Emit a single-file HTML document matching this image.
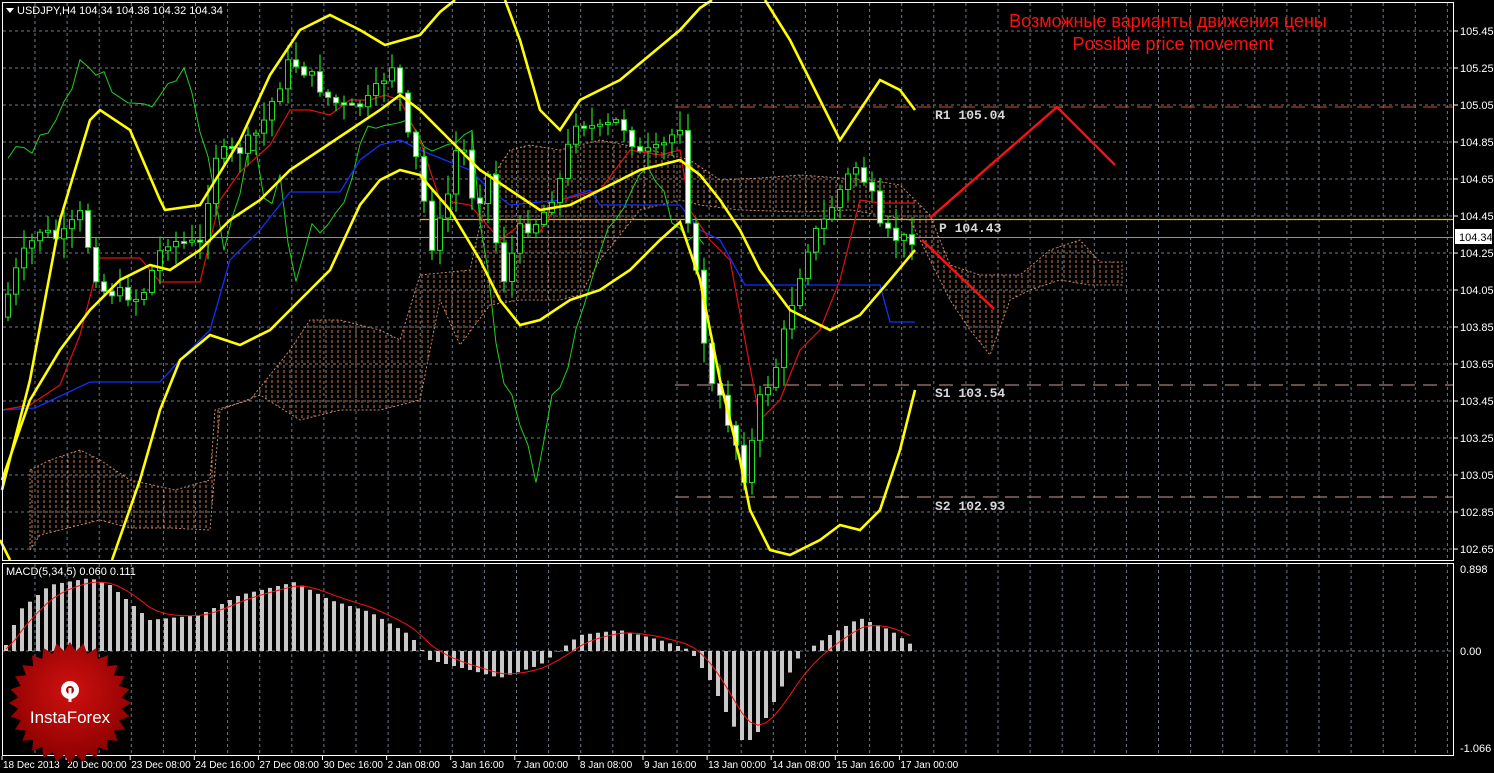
<!DOCTYPE html>
<html><head><meta charset="utf-8"><style>
html,body{margin:0;padding:0;background:#000;width:1494px;height:773px;overflow:hidden}
svg{display:block}
.ax{font-family:"Liberation Sans",sans-serif;font-size:11px;fill:#fff}
.xl{font-family:"Liberation Sans",sans-serif;font-size:10px;fill:#fff}
.lv{font-family:"Liberation Mono",monospace;font-size:13px;fill:#d8d8d8;font-weight:bold}
</style></head><body>
<svg id="s" width="1494" height="773" xmlns="http://www.w3.org/2000/svg">
<defs>
<pattern id="hatch" width="6" height="5" patternUnits="userSpaceOnUse">
<line x1="2" y1="0" x2="2" y2="3" stroke="#e8905a" stroke-width="1"/>
</pattern>
<radialGradient id="rg" cx="50%" cy="40%" r="60%"><stop offset="0" stop-color="#d01010"/><stop offset="1" stop-color="#8a0000"/></radialGradient>
</defs>
<rect x="0" y="0" width="1494" height="773" fill="#000"/>
<g id="grid" stroke="#6a7a8a" stroke-dasharray="3,3" stroke-width="1"></g>
<polygon fill="url(#hatch)" stroke="#e8a080" stroke-dasharray="2,2" stroke-width="1" opacity="0.85" points="30,470 50,460 80,450 100,460 130,480 175,490 210,480 215,410 250,400 290,350 310,320 340,320 380,330 400,340 420,275 470,270 490,180 510,150 530,145 560,150 600,140 650,150 690,160 720,180 760,178 800,175 840,178 870,180 900,185 930,215 950,265 980,275 1020,275 1050,250 1080,240 1100,262 1122,262 1122,285 1090,285 1060,280 1030,290 1010,300 990,355 970,330 950,300 930,260 910,220 880,215 850,210 800,212 740,210 700,205 680,200 640,210 600,260 580,295 560,300 520,300 490,305 460,345 440,300 420,400 380,410 340,410 300,420 260,395 220,410 210,530 170,528 130,528 100,520 60,530 40,535 30,550"/>
<line x1="675" y1="107" x2="1454" y2="107" stroke="#d05030" stroke-dasharray="14,8"/>
<line x1="675" y1="385" x2="1454" y2="385" stroke="#c8a090" stroke-dasharray="14,8"/>
<line x1="675" y1="497" x2="1454" y2="497" stroke="#c8a090" stroke-dasharray="14,8"/>
<line x1="420" y1="219.5" x2="1454" y2="219.5" stroke="#e8b000" stroke-width="1.3"/>
<line x1="2" y1="237.5" x2="1454" y2="237.5" stroke="#8a949e" stroke-width="1"/>
<polyline id="green" fill="none" stroke="#20d020" stroke-width="1"/>
<polyline fill="none" stroke="#1030ff" stroke-width="1.3" points="2,410 35,408 90,382 160,382 180,360 210,330 230,260 260,230 290,192 340,192 360,160 380,145 400,140 420,150 440,158 470,170 490,190 510,205 560,200 590,190 600,205 680,205 700,230 720,240 745,285 880,285 890,322 915,322"/>
<polyline fill="none" stroke="#e01010" stroke-width="1.2" points="2,410 30,405 60,385 80,335 100,258 140,258 160,282 200,282 220,200 240,172 270,145 290,110 310,110 330,115 350,100 370,100 385,95 400,100 420,140 440,200 470,205 500,240 520,225 540,232 560,200 600,190 630,150 660,155 680,150 690,210 710,240 730,260 760,420 780,400 800,350 820,330 840,280 860,200 880,203 915,203"/>
<g id="candles"></g>
<g fill="none" stroke="#ffff00" stroke-width="2.6">
<polyline points="2,490 30,380 60,220 90,120 100,110 130,130 160,200 165,210 200,205 240,140 270,75 300,30 330,15 360,30 385,45 420,35 440,12 455,0"/>
<polyline points="505,0 520,40 540,110 560,130 580,100 620,80 650,55 680,30 700,8 712,0"/>
<polyline points="765,0 790,40 820,100 840,140 860,110 880,80 900,90 915,110"/>
<polyline points="2,480 30,400 60,350 90,310 120,280 150,265 170,270 200,250 230,220 260,200 290,170 320,150 350,130 380,110 400,95 420,110 450,140 480,170 510,190 540,210 570,205 600,190 640,170 680,160 700,175 720,200 740,230 760,270 790,310 830,330 860,315 890,280 915,250"/>
<polyline points="0,540 10,560"/>
<polyline points="112,560 140,480 160,410 180,360 210,335 240,345 270,330 300,300 330,270 360,205 380,180 400,170 420,175 450,210 480,260 500,300 520,325 540,320 570,300 600,290 630,270 660,240 680,222 700,280 720,380 740,460 750,510 770,550 790,555 820,540 840,525 860,530 880,510 900,450 915,390"/>
</g>
<g stroke="#ff1010" stroke-width="2.4" fill="none">
<polyline points="930,218 1057,107 1115,165"/>
<polyline points="922,240 994,309"/>
</g>
<text x="1168" y="27" text-anchor="middle" font-family="Liberation Sans,sans-serif" font-size="18" fill="#ff1010">Возможные варианты движения цены</text>
<text x="1173" y="50" text-anchor="middle" font-family="Liberation Sans,sans-serif" font-size="18" fill="#ff1010">Possible price movement</text>
<text class="lv" x="935" y="119">R1 105.04</text>
<text class="lv" x="939" y="232">P 104.43</text>
<text class="lv" x="935" y="397">S1 103.54</text>
<text class="lv" x="935" y="510">S2 102.93</text>
<line x1="2" y1="651" x2="1454" y2="651" stroke="#6a7a8a" stroke-dasharray="3,3"/>
<g id="macd" fill="#c8c8c8"></g>
<polyline id="sig" fill="none" stroke="#ff1010" stroke-width="1"/>
<rect x="2.5" y="2.5" width="1451" height="558" fill="none" stroke="#fff" stroke-width="1"/>
<rect x="2.5" y="563.5" width="1451" height="192" fill="none" stroke="#fff" stroke-width="1"/>
<polygon points="6,8 14,8 10,13" fill="#fff"/>
<text class="ax" x="17" y="14">USDJPY,H4  104.34 104.38 104.32 104.34</text>
<text class="ax" x="6" y="575">MACD(5,34,5) 0.060 0.111</text>
<g id="yax" class="ax"></g>
<rect x="1455" y="229" width="37" height="15" fill="#fff"/>
<text x="1459" y="241" font-family="Liberation Sans,sans-serif" font-size="11" fill="#000">104.34</text>
<text class="ax" x="1460" y="573">0.898</text>
<text class="ax" x="1460" y="655">0.00</text>
<text class="ax" x="1460" y="752">-1.066</text>
<g id="xax" class="xl"></g>
<polygon id="star" fill="url(#rg)"/>
<g fill="#fff" transform="translate(70,690)">
<circle cx="0" cy="0" r="9"/><circle cx="0" cy="0" r="4" fill="#b00000"/>
<rect x="-1.5" y="-2" width="3" height="14"/>
</g>
<text x="70" y="723" text-anchor="middle" font-family="Liberation Sans,sans-serif" font-size="17" fill="#fff">InstaForex</text>
</svg>
<script>
var NS="http://www.w3.org/2000/svg";
function el(t,a,p){var e=document.createElementNS(NS,t);for(var k in a)e.setAttribute(k,a[k]);p.appendChild(e);return e;}
var g=document.getElementById('grid');
for(var x=35;x<1454;x+=32.1){el('line',{x1:x,y1:3,x2:x,y2:560},g);el('line',{x1:x,y1:564,x2:x,y2:755},g);}
var yax=document.getElementById('yax');
var pr=[105.45,105.25,105.05,104.85,104.65,104.45,104.25,104.05,103.85,103.65,103.45,103.25,103.05,102.85,102.65];
pr.forEach(function(p,i){var y=31+i*37;el('line',{x1:3,y1:y,x2:1453,y2:y},g);el('line',{x1:1454,y1:y,x2:1458,y2:y,stroke:'#fff'},yax);var t=el('text',{x:1460,y:y+4},yax);t.textContent=p.toFixed(2);});
var xl=["18 Dec 2013","20 Dec 00:00","23 Dec 08:00","24 Dec 16:00","27 Dec 08:00","30 Dec 16:00","2 Jan 08:00","3 Jan 16:00","7 Jan 00:00","8 Jan 08:00","9 Jan 16:00","13 Jan 00:00","14 Jan 08:00","15 Jan 16:00","17 Jan 00:00"];
var xa=document.getElementById('xax');
xl.forEach(function(s,i){var x=2+i*64.1;el('line',{x1:x,y1:756,x2:x,y2:760,stroke:'#fff'},xa);var t=el('text',{x:x+1,y:768},xa);t.textContent=s;});
var kp=[[6,300],[20,260],[40,230],[60,240],[80,215],[100,290],[130,295],[140,300],[165,240],[200,245],[215,155],[240,150],[260,130],[290,60],[310,75],[330,100],[350,110],[370,100],[395,60],[405,130],[420,170],[430,250],[445,210],[460,130],[475,210],[490,170],[500,290],[520,230],[540,220],[560,180],[575,120],[600,130],[620,120],[640,155],[660,150],[680,125],[690,240],[700,300],[708,380],[720,400],[735,440],[745,480],[760,400],[775,370],[795,290],[810,240],[825,220],[840,190],[855,165],[870,190],[880,230],[900,240],[915,237]];
function interp(k,x){for(var i=0;i<k.length-1;i++){if(x<=k[i+1][0]){var a=k[i],b=k[i+1];return a[1]+(b[1]-a[1])*(x-a[0])/(b[0]-a[0]);}}return k[k.length-1][1];}
var seed=7;function rnd(){seed=(seed*9301+49297)%233280;return seed/233280;}
var cg=document.getElementById('candles');var prev=interp(kp,0);var gp=[];
for(var x=8;x<=912;x+=8){var c=interp(kp,x)+(rnd()-0.5)*14;var o=prev;var hi=Math.min(o,c)-rnd()*18-2,lo=Math.max(o,c)+rnd()*18+2;
el('line',{x1:x,y1:hi,x2:x,y2:lo,stroke:'#20e020','stroke-width':1.2},cg);
var t=Math.min(o,c),h=Math.max(2,Math.abs(c-o));
el('rect',{x:x-2.5,y:t,width:5,height:h,fill:(c>o?'#fff':'#000'),stroke:'#20e020','stroke-width':1},cg);
prev=c;if(x>=210)gp.push((x-208)+','+c);}
document.getElementById('green').setAttribute('points',gp.join(' '));
var mk=[[6,645],[20,610],[50,585],[90,578],[110,585],[150,620],[200,615],[240,595],[295,582],[330,600],[370,612],[410,635],[430,660],[470,670],[500,678],[540,665],[580,635],[620,630],[660,640],[690,650],[710,680],[730,720],[745,745],[760,730],[780,690],[800,655],[830,635],[860,618],[890,630],[912,645]];
var mg=document.getElementById('macd');var sp=[];var sv=651;
for(var x=6;x<=914;x+=8){var y=interp(mk,x);el('rect',{x:x-2,y:Math.min(y,651),width:4,height:Math.abs(y-651)},mg);sv=sv+(y-sv)*0.33;sp.push(x+','+sv.toFixed(1));}
document.getElementById('sig').setAttribute('points',sp.join(' '));
var pts=[];for(var i=0;i<56;i++){var a=i*Math.PI/28,r=(i%2?52:61);pts.push((70+r*Math.cos(a)).toFixed(1)+','+(703+r*Math.sin(a)).toFixed(1));}
document.getElementById('star').setAttribute('points',pts.join(' '));
</script>
</body></html>
